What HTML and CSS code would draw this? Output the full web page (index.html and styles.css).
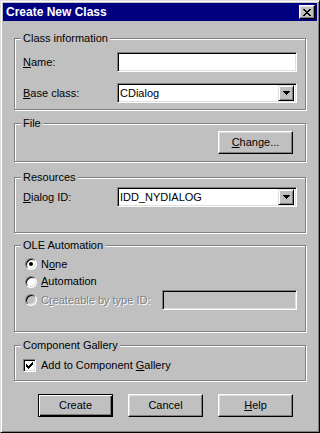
FILE: index.html
```html
<!DOCTYPE html>
<html lang="en">
<head>
  <meta charset="UTF-8" />
  <title>Create New Class</title>
  <link rel="stylesheet" href="styles.css">
</head>
<body>
  <div class="window">
    <div class="titlebar">
      <span class="title">Create New Class</span>
      <span class="close-btn">
        <svg width="8" height="7" viewBox="0 0 8 7" shape-rendering="crispEdges">
          <path d="M0 0h2v1H0z M6 0h2v1H6z M1 1h2v1H1z M5 1h2v1H5z M2 2h4v1H2z M3 3h2v1H3z M2 4h4v1H2z M1 5h2v1H1z M5 5h2v1H5z M0 6h2v1H0z M6 6h2v1H6z" fill="#000"/>
        </svg>
      </span>
    </div>

    <div class="content">
      <!-- Class information -->
      <div class="group group-class">
        <span class="group-title">Class information</span>
        <div class="form-row first">
          <span class="label"><u>N</u>ame:</span>
          <input type="text" class="field" />
        </div>
        <div class="form-row second">
          <span class="label"><u>B</u>ase class:</span>
          <div class="field combo">
            <span class="combo-text">CDialog</span>
            <span class="combo-btn">
              <svg width="7" height="4" viewBox="0 0 7 4" shape-rendering="crispEdges">
                <path d="M0 0h7v1H0z M1 1h5v1H1z M2 2h3v1H2z M3 3h1v1H3z" fill="#000"/>
              </svg>
            </span>
          </div>
        </div>
      </div>

      <!-- File -->
      <div class="group group-file">
        <span class="group-title">File</span>
        <button class="btn change-btn"><u>C</u>hange...</button>
      </div>

      <!-- Resources -->
      <div class="group group-res">
        <span class="group-title">Resources</span>
        <div class="form-row">
          <span class="label"><u>D</u>ialog ID:</span>
          <div class="field combo">
            <span class="combo-text">IDD_NYDIALOG</span>
            <span class="combo-btn">
              <svg width="7" height="4" viewBox="0 0 7 4" shape-rendering="crispEdges">
                <path d="M0 0h7v1H0z M1 1h5v1H1z M2 2h3v1H2z M3 3h1v1H3z" fill="#000"/>
              </svg>
            </span>
          </div>
        </div>
      </div>

      <!-- OLE Automation -->
      <div class="group group-ole">
        <span class="group-title">OLE Automation</span>
        <div class="option row-1">
          <span class="radio checked"></span>
          <span>N<u>o</u>ne</span>
        </div>
        <div class="option row-2">
          <span class="radio"></span>
          <span><u>A</u>utomation</span>
        </div>
        <div class="option row-3 disabled">
          <span class="radio"></span>
          <span>C<u>r</u>eateable by type ID:</span>
          <input type="text" class="field type-field" disabled />
        </div>
      </div>

      <!-- Component Gallery -->
      <div class="group group-gallery">
        <span class="group-title">Component Gallery</span>
        <div class="option check-row">
          <span class="checkbox">
            <svg width="7" height="7" viewBox="0 0 7 7" shape-rendering="crispEdges">
              <path d="M6 0h1v1H6z M5 1h2v1H5z M0 2h1v1H0z M4 2h3v1H4z M0 3h2v1H0z M3 3h3v1H3z M0 4h5v1H0z M1 5h3v1H1z M2 6h1v1H2z" fill="#000"/>
            </svg>
          </span>
          <span>Add to Component <u>G</u>allery</span>
        </div>
      </div>

      <div class="buttons">
        <button class="btn btn-default">Create</button>
        <button class="btn">Cancel</button>
        <button class="btn"><u>H</u>elp</button>
      </div>
    </div>
  </div>
</body>
</html>
```

FILE: styles.css
```css
* {
  box-sizing: border-box;
}

body {
  margin: 0;
  background-color: #c0c0c0;
  font-family: "Liberation Sans", Arial, sans-serif;
  font-size: 11px;
  line-height: 13px;
  color: #000;
}

u {
  text-decoration: underline;
  text-underline-offset: 1px;
}

/* Window frame */
.window {
  width: 320px;
  height: 433px;
  padding: 2px;
  background-color: #c0c0c0;
  border: 1px solid;
  border-color: #dfdfdf #000 #000 #dfdfdf;
  box-shadow: inset 1px 1px #fff, inset -1px -1px #808080;
}

.titlebar {
  height: 18px;
  display: flex;
  align-items: center;
  justify-content: space-between;
  padding: 0 2px 0 3px;
  background-color: #000080;
  color: #fff;
}

.title {
  font-weight: bold;
  font-size: 12px;
}

.close-btn {
  width: 16px;
  height: 14px;
  display: flex;
  align-items: center;
  justify-content: center;
  background-color: #c0c0c0;
  border: 1px solid;
  border-color: #fff #000 #000 #fff;
  box-shadow: inset -1px -1px #808080, inset 1px 1px #dfdfdf;
}

.content {
  display: flex;
  flex-direction: column;
  padding: 0 11px;
}

/* Group boxes */
.group {
  width: 292px;
  display: flex;
  flex-direction: column;
  padding: 0 8px;
  border: 1px solid #808080;
  box-shadow: inset 1px 1px #fff, 1px 1px #fff;
}

.group-title {
  align-self: flex-start;
  margin: -7px 0 0 -2px;
  padding: 0 2px;
  height: 13px;
  background-color: #c0c0c0;
}

.group-class {
  margin-top: 17px;
  height: 72px;
}

.group-file {
  margin-top: 13px;
  height: 39px;
}

.group-res {
  margin-top: 15px;
  height: 56px;
}

.group-ole {
  margin-top: 12px;
  height: 87px;
}

.group-gallery {
  margin-top: 13px;
  height: 36px;
}

/* Label + field rows */
.form-row {
  display: flex;
  align-items: center;
  height: 20px;
  margin-top: 3px;
}

.form-row.first {
  margin-top: 7px;
}

.form-row.second {
  margin-top: 11px;
}

.label {
  width: 94px;
}

.field {
  width: 180px;
  height: 20px;
  margin: 0;
  padding: 0 2px;
  font: inherit;
  background-color: #fff;
  border: 1px solid;
  border-color: #808080 #fff #fff #808080;
  box-shadow: inset 1px 1px #000, inset -1px -1px #dfdfdf;
  outline: none;
}

.combo {
  display: flex;
  align-items: center;
  padding: 2px 2px 2px 2px;
}

.combo-text {
  flex-grow: 1;
  padding-left: 0;
}

.combo-btn {
  width: 16px;
  height: 16px;
  display: flex;
  align-items: center;
  justify-content: center;
  background-color: #c0c0c0;
  border: 1px solid;
  border-color: #dfdfdf #000 #000 #dfdfdf;
  box-shadow: inset 1px 1px #fff, inset -1px -1px #808080;
}

/* Buttons */
.btn {
  width: 75px;
  height: 23px;
  padding: 0;
  font: inherit;
  color: #000;
  background-color: #c0c0c0;
  border: 1px solid;
  border-color: #fff #000 #000 #fff;
  box-shadow: inset -1px -1px #808080, inset 1px 1px #dfdfdf;
}

.btn-default {
  border: 1px solid #000;
  box-shadow: inset 1px 1px #fff, inset -1px -1px #000, inset -2px -2px #808080;
}

.change-btn {
  align-self: flex-end;
  margin: 1px 4px 0 0;
}

.buttons {
  display: flex;
  gap: 15px;
  margin: 13px 0 0 24px;
}

/* Radios and checkbox */
.option {
  display: flex;
  align-items: center;
  gap: 4px;
}

.row-1 {
  margin-top: 3px;
  height: 18px;
}

.row-2 {
  height: 17px;
}

.row-3 {
  height: 20px;
}

.radio {
  position: relative;
  width: 12px;
  height: 12px;
  margin-left: 2px;
  border-radius: 50%;
  background-color: #fff;
  border: 1px solid;
  border-color: #808080 #fff #fff #808080;
  box-shadow: inset 1px 1px #000, inset -1px -1px #dfdfdf;
}

.radio.checked::after {
  content: "";
  position: absolute;
  left: 3px;
  top: 3px;
  width: 4px;
  height: 4px;
  border-radius: 50%;
  background-color: #000;
}

.disabled {
  color: #808080;
  text-shadow: 1px 1px 0 #fff;
}

.disabled .radio {
  background-color: #c0c0c0;
}

.type-field {
  width: 135px;
  margin-left: auto;
  background-color: #c0c0c0;
}

.check-row {
  margin-top: 6px;
  height: 15px;
  gap: 5px;
}

.checkbox {
  width: 13px;
  height: 13px;
  display: flex;
  align-items: center;
  justify-content: center;
  background-color: #fff;
  border: 1px solid;
  border-color: #808080 #fff #fff #808080;
  box-shadow: inset 1px 1px #000, inset -1px -1px #dfdfdf;
}
```
